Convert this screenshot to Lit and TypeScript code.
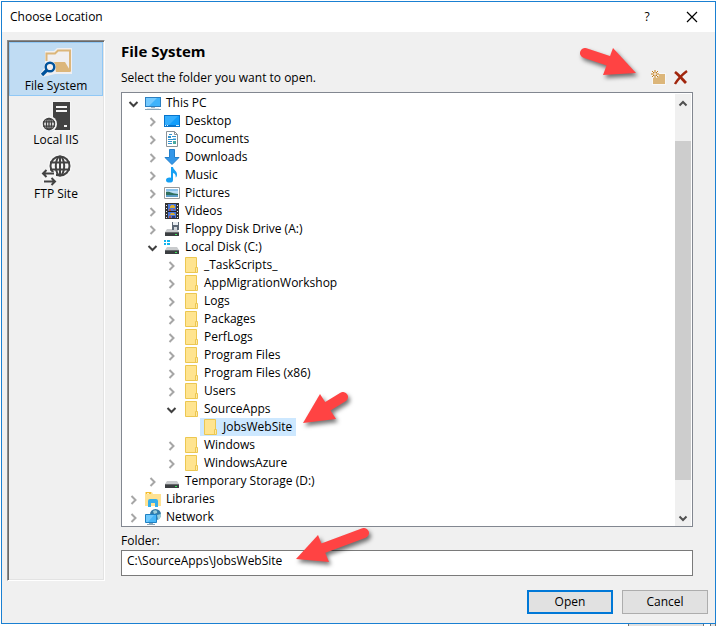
import { LitElement, html, svg, css, nothing } from "lit";
import { customElement, state } from "lit/decorators.js";

type IconName =
  | "pc" | "desktop" | "documents" | "downloads" | "music" | "pictures" | "videos"
  | "floppy" | "disk" | "drive" | "folder" | "libraries" | "network";

interface Node {
  label: string;
  icon: IconName;
  level: number;
  open?: boolean;
  leaf?: boolean;
}

const nodes: Node[] = [
  { label: "This PC", icon: "pc", level: 0, open: true },
  { label: "Desktop", icon: "desktop", level: 1 },
  { label: "Documents", icon: "documents", level: 1 },
  { label: "Downloads", icon: "downloads", level: 1 },
  { label: "Music", icon: "music", level: 1 },
  { label: "Pictures", icon: "pictures", level: 1 },
  { label: "Videos", icon: "videos", level: 1 },
  { label: "Floppy Disk Drive (A:)", icon: "floppy", level: 1 },
  { label: "Local Disk (C:)", icon: "disk", level: 1, open: true },
  { label: "_TaskScripts_", icon: "folder", level: 2 },
  { label: "AppMigrationWorkshop", icon: "folder", level: 2 },
  { label: "Logs", icon: "folder", level: 2 },
  { label: "Packages", icon: "folder", level: 2 },
  { label: "PerfLogs", icon: "folder", level: 2 },
  { label: "Program Files", icon: "folder", level: 2 },
  { label: "Program Files (x86)", icon: "folder", level: 2 },
  { label: "Users", icon: "folder", level: 2 },
  { label: "SourceApps", icon: "folder", level: 2, open: true },
  { label: "JobsWebSite", icon: "folder", level: 3, leaf: true },
  { label: "Windows", icon: "folder", level: 2 },
  { label: "WindowsAzure", icon: "folder", level: 2 },
  { label: "Temporary Storage (D:)", icon: "drive", level: 1 },
  { label: "Libraries", icon: "libraries", level: 0 },
  { label: "Network", icon: "network", level: 0 },
];

const driveBody = svg`
  <path d="M3 8h10l2 3H1z" fill="#c9cbcd"/>
  <path d="M1 11h14v4H1z" fill="#3b3e41"/>
  <path d="M1 11h14v1H1z" fill="#66696c"/>
  <path d="M11 13h2v1h-2z" fill="#3be45a"/>`;

const icons: Record<IconName, unknown> = {
  pc: svg`
    <path d="M0 2h16v10H0z" fill="#2c7fc0"/><path d="M1 3h14v8H1z" fill="#3fb3fb"/>
    <path d="M1 3h11L4 11H1z" fill="#75caff"/>
    <path d="M6 12h4v1H6z" fill="#9fb6c6"/><path d="M0 14h16v1H0z" fill="#8ba6b9"/><path d="M2 13h12v1H2z" fill="#dfe8ee"/>`,
  desktop: svg`
    <path d="M0 2h16v12H0z" fill="#0674cc"/><path d="M1 3h14v9H1z" fill="#119dfb"/>
    <path d="M1 3h13L5 12H1z" fill="#35aefd"/><path d="M1 12h1v1H1zM3 12h1v1H3zM12 12h3v1h-3z" fill="#d7efff"/>`,
  documents: svg`
    <path d="M2.500 .5h8l3 3v12h-11z" fill="#fff" stroke="#8a9297"/><path d="M10.500 .5v3h3" fill="none" stroke="#8a9297"/>
    <path d="M5 3h3v1H5zM4 5h3v2H4zM8 5h4v1H8zM4 8h8v1H4zM4 10h4v1H4zM4 12h4v1H4z" fill="#3293cf"/>
    <path d="M9 10h3v3H9z" fill="#48aaa0"/><path d="M9 7h3v1H9z" fill="#9ad0ee"/>`,
  downloads: svg`<path d="M5.500 .5h5v8h4.500L8 15.500 1 8.500h4.500z" fill="#3497e8" stroke="#237fca"/>`,
  music: svg`
    <path d="M7 0h2c.3 3 4.500 4 4 8-.2 1.500-.8 2-1.300 2.600C12 8 11 6.500 9 6v7H7z" fill="#15a0f4"/>
    <ellipse cx="5.500" cy="13" rx="3.500" ry="2.600" fill="#15a0f4"/>`,
  pictures: svg`
    <path d="M.5 2.500h15v11H.5z" fill="#fff" stroke="#9a9a9a"/><path d="M2 4h12v8H2z" fill="#b9dcf5"/>
    <path d="M2 4h12v2H2z" fill="#8cc2ea"/><path d="M2 7c4-1 6 2 12 2v1H2z" fill="#2f6f5e"/><path d="M2 10h12v2H2z" fill="#5b9bc4"/>`,
  videos: svg`
    <path d="M1 0h14v16H1z" fill="#333"/><path d="M4 1h8v14H4z" fill="#4c78d8"/>
    <path d="M2 2h1v1H2zM2 5h1v1H2zM2 8h1v1H2zM2 11h1v1H2zM2 14h1v1H2zM13 2h1v1h-1zM13 5h1v1h-1zM13 8h1v1h-1zM13 11h1v1h-1zM13 14h1v1h-1z" fill="#eee"/>
    <path d="M4 8h8v1H4z" fill="#222"/><path d="M7 2h3v1h1v2H6V3h1zM7 10h3v1h1v1H6z" fill="#d9ad32"/>
    <path d="M5 6h2v2H5zM9 6h2v1H9zM5 13h2v2H5z" fill="#b3503e"/><path d="M8 13h3v2H8z" fill="#273d77"/>`,
  floppy: svg`${driveBody}
    <path d="M8 1h7v8H8z" fill="#5c6876"/><path d="M9 1h5v3H9z" fill="#e8edf2"/><path d="M10 6h3v3h-3z" fill="#cfd5db"/>`,
  disk: svg`${driveBody}
    <path d="M0 1h2v2H0zM3 1h3v2H3zM0 4h2v2H0zM3 4h3v2H3z" fill="#12b4ee"/>`,
  drive: driveBody,
  folder: svg`
    <path d="M2.500 .5h11v15h-11z" fill="#ffe48f" stroke="#ecc751"/>
    <path d="M12.500 10.500h2v5h-2z" fill="#ffe9a4" stroke="#ecc751"/>`,
  libraries: svg`
    <path d="M0 1h7l1 2h8v12H0z" fill="#ffe292"/><path d="M1 1h5v2H1z" fill="#f3bc2e"/><path d="M2 2h2v1H2z" fill="#fff3c8"/>
    <path d="M3 16V10q0-2 2-2h6q2 0 2 2v6h-3v-4H6v4z" fill="#35aeea"/>`,
  network: svg`
    <circle cx="10.500" cy="5.500" r="5.500" fill="#347ba6"/><path d="M8 2c3-2 5 0 4 2l-3 1zM12 6l4-1c0 3-1 5-3 6z" fill="#9cd0dc"/>
    <path d="M.5 5.500h11v8H.5z" fill="#48b7f8" stroke="#1e80c2"/><path d="M1 6h8l-6 7H1z" fill="#6fc9fd"/>
    <path d="M4 14h4v1h2v1H2v-1h2z" fill="#8ba6b9"/>`,
};

const globe = (cx: number, cy: number, r: number, w: number) => svg`
  <circle cx=${cx} cy=${cy} r=${r + 2} fill="#f5f5f5"/>
  <g fill="none" stroke="#424242" stroke-width=${w}>
    <circle cx=${cx} cy=${cy} r=${r - 0.5}/>
    <ellipse cx=${cx} cy=${cy} rx=${r * 0.42} ry=${r - 0.5}/>
    <path d="M${cx - r} ${cy - r * 0.35}h${2 * r}M${cx - r} ${cy + r * 0.35}h${2 * r}M${cx} ${cy - r}v${2 * r}"/>
  </g>`;

const places = [
  {
    label: "File System",
    icon: svg`
      <path d="M5 4h9l3-3h15v26H15L3 30 0 27l5-7z" fill="#f0eff1"/>
      <path d="M6.500 14V6.500H15l3-3h12V24" fill="none" stroke="#dcb67a" stroke-width="2"/>
      <path d="M14 15h11l6 10H16z" fill="#dcb67a"/>
      <circle cx="10" cy="20" r="6" fill="#f0eff1"/>
      <circle cx="10" cy="20" r="4.300" fill="#f0eff1" stroke="#00539c" stroke-width="2.400"/>
      <path d="M7 23L2 28" stroke="#00539c" stroke-width="3.200"/>`,
  },
  {
    label: "Local IIS",
    icon: svg`
      <path d="M12 0h19v31H12z" fill="#f5f5f5"/><path d="M13 1h17v28H13z" fill="#424242"/>
      <path d="M16 5h11v2H16zM16 9h11v2H16zM24 24h3v2h-3z" fill="#f5f5f5"/>
      ${globe(9, 23, 6, 1.4)}`,
  },
  {
    label: "FTP Site",
    icon: svg`
      ${globe(20, 11, 10, 2)}
      <path d="M1 19l7-5v3h8v11l-5 3v-3H3z" fill="#f5f5f5"/>
      <path d="M14 18.500H3M6.500 15L3 18.500 6.500 22M4 26.500h11M11.500 23l3.500 3.500L11.500 30" fill="none" stroke="#424242" stroke-width="2"/>`,
  },
];

const chevron = (open?: boolean) => html`
  <svg class="glyph" viewBox="0 0 16 16" aria-hidden="true">
    <path class=${open ? "chev open" : "chev"} d=${open ? "M4.500 6l4 4 4-4" : "M6.500 4l4 4-4 4"}></path>
  </svg>`;

@customElement("app-root")
export class AppRoot extends LitElement {
  @state() private place = "File System";
  @state() private selected = "JobsWebSite";

  static styles = css`
    :host {
      min-height: 100vh;
      box-sizing: border-box;
      padding: 1px 1px 0;
      background: #fff;
      color: #000;
      font: 12px/18px "Open Sans", "Noto Sans", sans-serif;
      display: flex;
      flex-direction: column;
    }
    * { box-sizing: border-box; }
    button, input { font: inherit; color: inherit; margin: 0; }
    .plain { padding: 0; border: 0; background: none; }
    .dialog {
      flex: 1;
      display: flex;
      flex-direction: column;
      border: 1px solid #1a80d2;
      background: #f0f0f0;
    }
    .titlebar {
      display: flex;
      align-items: center;
      height: 30px;
      padding: 0 13px 0 8px;
      background: #fff;
    }
    .titlebar h1 { flex: 1; margin: 0; font: inherit; }
    .caption { display: grid; place-items: center; width: 20px; height: 20px; margin-left: 25px; }
    .caption svg { width: 12px; height: 12px; }
    .content { flex: 1; display: flex; gap: 16px; padding: 8px 22px 0 5px; }
    .places {
      flex: none;
      width: 98px;
      margin: 0;
      list-style: none;
      border: 1px solid;
      border-color: #8a8a8a #fff #fff #8a8a8a;
      box-shadow: inset 1px 1px #696969, inset -1px -1px #e3e3e3;
      padding: 1px;
    }
    .place {
      display: flex;
      flex-direction: column;
      align-items: center;
      width: 100%;
      height: 54px;
      padding: 4px 0 0;
      border: 1px solid transparent;
      background: none;
    }
    .place.on { border-color: #90c8f6; background: #c0dcf3; }
    .place svg { width: 32px; height: 32px; flex: none; }
    .place span { line-height: 14px; }
    .panel { position: relative; flex: 1; min-width: 0; display: flex; flex-direction: column; padding-bottom: 5px; }
    h2 { margin: 0; font-size: 15px; line-height: 22px; font-weight: 700; }
    .bar { display: flex; align-items: center; height: 30px; padding-top: 1px; }
    .bar p { flex: 1; margin: 0; }
    .tools { display: flex; gap: 6px; padding-right: 4px; }
    .tools button, .tools svg { display: block; width: 16px; height: 16px; }
    .treebox {
      flex: 1;
      display: flex;
      padding: 1px 1px 0;
      border: 1px solid #828790;
      background: #fff;
    }
    .tree { flex: 1; margin: 0; padding: 0; list-style: none; }
    .row { display: flex; align-items: center; gap: 2px; height: 18px; }
    .row.l0 { padding-left: 2px; }
    .row.l1 { padding-left: 21px; }
    .row.l2 { padding-left: 40px; }
    .row.l3 { padding-left: 59px; }
    .glyph { display: block; width: 16px; height: 16px; flex: none; }
    .twist { width: 16px; height: 16px; flex: none; }
    .chev { fill: none; stroke: #a6a6a6; stroke-width: 2; }
    .chev.open { stroke: #404040; }
    .row .twist { padding-top: 1px; }
    .item {
      display: flex;
      align-items: center;
      gap: 5px;
      height: 18px;
      padding: 0 4px 0 2px;
      white-space: nowrap;
    }
    .item.on { background: #cde8ff; }
    .scroll { display: flex; flex-direction: column; width: 16px; background: #f0f0f0; }
    .scroll .step { width: 16px; height: 17px; }
    .scroll .chev { stroke: #505050; }
    .track { flex: 1; padding: 30px 0 29px; display: flex; }
    .thumb { flex: 1; background: #cdcdcd; }
    label { margin-top: 5px; }
    input {
      width: 100%;
      height: 26px;
      padding: 0 5px 6px;
      border: 1px solid #7a7a7a;
      background: #fff;
    }
    .actions { display: flex; justify-content: flex-end; gap: 9px; padding: 9px 7px; }
    .actions button {
      width: 86px;
      height: 24px;
      padding: 0;
      border: 1px solid #adadad;
      background: #e1e1e1;
    }
    .actions .default { border: 2px solid #0078d7; }
    .behind { display: flex; justify-content: flex-end; gap: 6px; height: 2px; }
    .behind span { width: 76px; background: #e1e1e1; border: solid #707070; border-width: 0 1px; }
    .behind span + span { width: 6px; }
    .arrow { position: absolute; overflow: visible; pointer-events: none; filter: drop-shadow(2px 3px 2px rgba(0, 0, 0, 0.55)); fill: #ff4343; }
    .arrow line { stroke: #ff4343; stroke-width: 10; stroke-linecap: round; }
    .to-tools { width: 56px; height: 30px; right: 57px; top: 7px; }
    .to-item { width: 46px; height: 32px; left: 182px; top: 351px; }
    .to-path { width: 78px; height: 36px; left: 175px; top: 487px; }
  `;

  render() {
    return html`
      <section class="dialog" role="dialog" aria-labelledby="title">
        <header class="titlebar">
          <h1 id="title">Choose Location</h1>
          <button class="plain caption" aria-label="Help">?</button>
          <button class="plain caption" aria-label="Close">
            <svg viewBox="0 0 12 12"><path d="M1 1l10 10M11 1L1 11" stroke="#000" stroke-width="1.200"></path></svg>
          </button>
        </header>
        <div class="content">
          <ul class="places">
            ${places.map((p) => html`
              <li>
                <button class=${p.label === this.place ? "place on" : "place"} @click=${() => (this.place = p.label)}>
                  <svg viewBox="0 0 32 32" aria-hidden="true">${p.icon}</svg>
                  <span>${p.label}</span>
                </button>
              </li>`)}
          </ul>
          <main class="panel">
            <h2>${this.place}</h2>
            <div class="bar">
              <p>Select the folder you want to open.</p>
              <div class="tools">
                <button class="plain" aria-label="New folder">
                  <svg viewBox="0 0 16 16">
                    <path d="M1 5h6l1-2h7v12H1z" fill="#f8f8f8"/>
                    <path d="M2 6h5l1-2h6v10H2z" fill="#dcb67a"/>
                    <circle cx="4" cy="4" r="4" fill="#f5f5f5"/>
                    <path d="M4 0v8M0 4h8M1 1l6 6M7 1L1 7" stroke="#c27d1a"/>
                    <circle cx="4" cy="4" r="1" fill="#fff"/>
                  </svg>
                </button>
                <button class="plain" aria-label="Delete">
                  <svg viewBox="0 0 16 16">
                    <path d="M2 2c4 3 8 8 11 11" fill="none" stroke="#a1260d" stroke-width="2.800"/>
                    <path d="M14 1C10 4 5 9 2 14" fill="none" stroke="#a1260d" stroke-width="2.400"/>
                  </svg>
                </button>
              </div>
            </div>
            <div class="treebox">
              <ul class="tree" role="tree" aria-label="Folders">
                ${nodes.map((n) => html`
                  <li class="row l${n.level}" role="treeitem" aria-level=${n.level + 1}
                    aria-expanded=${n.leaf ? nothing : String(!!n.open)}>
                    ${n.leaf
                      ? html`<span class="twist"></span>`
                      : html`<button class="plain twist" aria-label="Toggle ${n.label}">${chevron(n.open)}</button>`}
                    <button class=${n.label === this.selected ? "plain item on" : "plain item"}
                      @click=${() => (this.selected = n.label)}>
                      <svg class="glyph" viewBox="0 0 16 16" aria-hidden="true">${icons[n.icon]}</svg>
                      <span>${n.label}</span>
                    </button>
                  </li>`)}
              </ul>
              <div class="scroll">
                <button class="plain step" aria-label="Scroll up">
                  <svg class="glyph" viewBox="0 0 16 16"><path class="chev" d="M4.500 10.500L8 7l3.500 3.500"/></svg>
                </button>
                <div class="track"><div class="thumb"></div></div>
                <button class="plain step" aria-label="Scroll down">
                  <svg class="glyph" viewBox="0 0 16 16"><path class="chev" d="M4.500 6.500L8 10l3.500-3.500"/></svg>
                </button>
              </div>
            </div>
            <label for="folder">Folder:</label>
            <input id="folder" type="text" value="C:\\SourceApps\\JobsWebSite" />
            <svg class="arrow to-tools" viewBox="0 0 56 30">
              <line x1="5" y1="6" x2="32" y2="15"/><path d="M33 1L56 26 23 28z"/>
            </svg>
            <svg class="arrow to-item" viewBox="0 0 46 32">
              <line x1="40" y1="6" x2="22" y2="17"/><path d="M0 32L17 3 33 28z"/>
            </svg>
            <svg class="arrow to-path" viewBox="0 0 78 36">
              <line x1="68" y1="6" x2="25" y2="22"/><path d="M0 32L22 8 33 35z"/>
            </svg>
          </main>
        </div>
        <footer class="actions">
          <button class="default">Open</button>
          <button>Cancel</button>
        </footer>
      </section>
      <div class="behind"><span></span><span></span></div>
    `;
  }
}
